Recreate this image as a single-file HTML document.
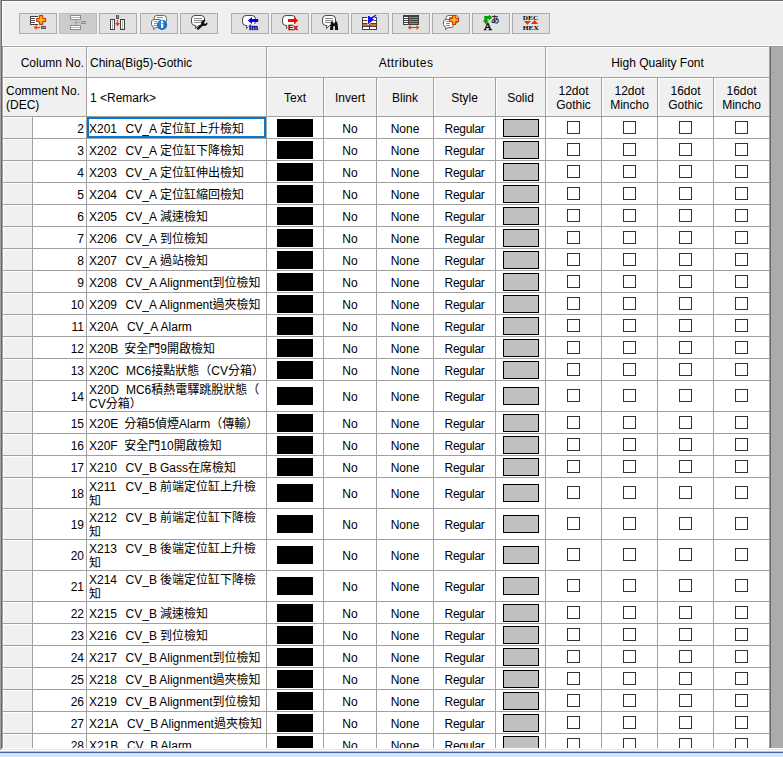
<!DOCTYPE html>
<html lang="zh-Hant">
<head>
<meta charset="utf-8">
<title>Comment Editor</title>
<style>
html,body{margin:0;padding:0;}
body{width:783px;height:757px;overflow:hidden;background:#f0f0f0;position:relative;
 font-family:"Liberation Sans","Noto Sans CJK TC","WenQuanYi Zen Hei",sans-serif;font-size:12px;line-height:14px;color:#000;}
#app{position:absolute;left:0;top:0;width:783px;height:757px;overflow:hidden;background:#f0f0f0;}
i,b,span{font-style:normal;font-weight:normal;}
.lb0{position:absolute;left:0;top:0;width:1px;height:750px;background:#a0a0a0;z-index:2;}
.lb1{position:absolute;left:1px;top:0;width:1px;height:749px;background:#696969;z-index:2;}
.lb2{position:absolute;left:2px;top:1px;width:1px;height:45px;background:#fff;}
.tp0{position:absolute;left:1px;top:0;width:782px;height:1px;background:#696969;}
.tp1{position:absolute;left:2px;top:1px;width:781px;height:1px;background:#fff;}
.tp2{position:absolute;left:2px;top:45px;width:781px;height:1px;background:#fff;}
.tb{position:absolute;top:13px;height:19px;width:36px;border:1px solid #adadad;background:#e1e1e1;}
.tb.dis{background:#cccccc;border-color:#bfbfbf;}
.tb svg{position:absolute;left:0;top:0;}
#tbsvg{position:absolute;left:0;top:0;}
.rl{position:absolute;left:770px;top:47px;width:1px;height:701px;background:#696969;}
.hl{position:absolute;left:2px;top:46px;width:781px;height:1px;background:#a0a0a0;}
#grid{position:absolute;left:2px;top:47px;width:781px;height:701px;background:#ababab;overflow:hidden;}
#tbl{position:absolute;left:0;top:0;width:769px;height:720px;background:#a0a0a0;}
/* all cells positioned in page coordinates via #abs */
#abs{position:absolute;left:-2px;top:-47px;width:783px;height:757px;}
.h{position:absolute;background:#f0f0f0;box-shadow:inset 1px 1px 0 #fff;white-space:nowrap;text-align:center;}
.h span{position:absolute;left:0;width:100%;}
.r{position:absolute;left:0;width:783px;height:21px;}
.r.d{height:30px;}
.r>i,.r>b,.r>span{position:absolute;top:0;height:100%;background:#fff;overflow:hidden;}
.r .rh{left:3px;width:29px;background:#f0f0f0;box-shadow:inset 1px 1px 0 #fff;}
.r .n{left:33px;width:51px;text-align:right;padding-right:2px;line-height:25px;}
.r.d .n,.r.d .a{line-height:32px;}
.r .c{left:87px;width:177px;padding-left:2px;white-space:pre;}
.r .c span{position:absolute;left:2px;top:5px;line-height:14px;}
.r .c span i{position:static;display:inline-block;height:auto;background:none;white-space:pre;vertical-align:baseline;}
.k1{width:36.6px;}.k2{width:36.9px;}.k3{width:35.3px;}.k4{width:37.9px;}
.r .c span i.g{display:inline;margin-left:-.4px;}
.r.d .c span{top:2px;}
.r .a{text-align:center;line-height:25px;}
.a1{left:324px;width:52px;}
.a2{left:377px;width:56px;}
.a3{left:434px;width:61px;letter-spacing:-.3px;}
.r .w1{left:267px;width:56px;}
.r .w2{left:496px;width:49px;}
.bk{position:absolute;left:10px;top:50%;margin-top:-9px;width:36px;height:18px;background:#000;}
.sd{position:absolute;left:7px;top:50%;margin-top:-9px;width:34px;height:16px;background:#c0c0c0;border:1px solid #000;}
.r .cb{width:55px;}
.q0{left:546px;}.q1{left:602px;}.q2{left:658px;}.q3{left:714px;}
.cb i{position:absolute;left:21px;top:50%;margin-top:-7px;width:11px;height:11px;border:1px solid #333;background:#fff;}
.sel{position:absolute;left:87px;top:117px;width:175px;height:17px;border:2px solid #0078d7;}
.bot1{position:absolute;left:0;top:748px;width:783px;height:3px;background:#fff;border-top:0;}
.bot1 i{position:absolute;left:0;top:1px;width:783px;height:1px;background:#e3e3e3;}
.bot2{position:absolute;left:0;top:751px;width:783px;height:1px;background:#f5b95a;}
.bot3{position:absolute;left:0;top:752px;width:783px;height:1px;background:#4265aa;}
.bot4{position:absolute;left:0;top:753px;width:783px;height:4px;background:#d7e4fa;}
</style>
</head>
<body>
<div id="app">
<div class="lb0"></div><div class="lb1"></div><div class="lb2"></div><div class="tp0"></div><div class="tp1"></div><div class="tp2"></div>
<div class="tb" style="left:19px"></div>
<div class="tb dis" style="left:59px"></div>
<div class="tb" style="left:99px"></div>
<div class="tb" style="left:140px"></div>
<div class="tb" style="left:180px"></div>
<div class="tb" style="left:231px"></div>
<div class="tb" style="left:271px"></div>
<div class="tb" style="left:311px"></div>
<div class="tb" style="left:351px"></div>
<div class="tb" style="left:392px"></div>
<div class="tb" style="left:432px"></div>
<div class="tb" style="left:472px"></div>
<div class="tb" style="left:512px"></div>
<svg id="tbsvg" width="783" height="46" viewBox="0 0 783 46"><defs><radialGradient id="og" cx="50%" cy="45%" r="60%"><stop offset="0" stop-color="#ffc21a"/><stop offset="1" stop-color="#ff7a00"/></radialGradient><radialGradient id="bg" cx="45%" cy="40%" r="65%"><stop offset="0" stop-color="#3a8fe0"/><stop offset="1" stop-color="#0a5fb8"/></radialGradient></defs>
<g shape-rendering="crispEdges"><rect x="30" y="16" width="8" height="9" fill="#fff"/><path d="M38,16.5 H30.5 V24.5 H38" fill="none" stroke="#404040"/><path d="M31,18.5 H35 M31,20.5 H35 M31,22.5 H35" stroke="#555"/></g>
<path d="M39.4,15.5 H42.8 V18.5 H45.7 V21.6 H42.8 V24.5 H39.4 V21.6 H36.5 V18.5 H39.4 Z" fill="url(#og)" stroke="#c8300a" stroke-width="1" stroke-linejoin="miter"/>
<path d="M34.5,27.5 H40" stroke="#ff4500" stroke-width="1.2"/><path d="M33.6,27.5 L36.8,24.9 V30.1 Z" fill="#ff4500"/>
<rect x="41" y="26" width="5" height="3" fill="#555" shape-rendering="crispEdges"/><rect x="42" y="27" width="4" height="1" fill="#ff7a00" shape-rendering="crispEdges"/>
<g shape-rendering="crispEdges"><rect x="70.5" y="15.5" width="10" height="4" fill="#fff" stroke="#8c8c8c"/><path d="M71,17.5 H80" stroke="#b4b4b4"/><rect x="70.5" y="25.5" width="10" height="4" fill="#fff" stroke="#8c8c8c"/><path d="M71,27.5 H80" stroke="#b4b4b4"/><path d="M76.5,20 V25" stroke="#a6a6a6"/><path d="M81,21.5 H86 M81,23.5 H86" stroke="#8c8c8c"/><path d="M81,22.5 H86" stroke="#bdbdbd"/></g><path d="M74.2,22.5 L76.5,20.6 V24.4 Z" fill="#a6a6a6"/><path d="M76,22.5 H80" stroke="#a6a6a6"/>
<g shape-rendering="crispEdges"><rect x="110.5" y="19.5" width="4" height="10" fill="#fff" stroke="#404040"/><path d="M112.5,20 V29" stroke="#b0b0b0"/><rect x="120.5" y="19.5" width="4" height="10" fill="#fff" stroke="#404040"/><path d="M122.5,20 V29" stroke="#b0b0b0"/><rect x="116" y="15" width="3" height="4" fill="#555"/><rect x="117" y="15" width="1" height="3" fill="#ff7a00"/></g><path d="M117.5,20 V24" stroke="#ff3300" stroke-width="1.2"/><path d="M115,23 H120 L117.5,26.2 Z" fill="#ff3300"/>
<path d="M156.5,15.5 H163.5 Q166.5,15.5 166.5,18.5 V20 Q166.5,23 163.5,23 H156 Q154,23 154,20 V18.5 Q154,15.5 156.5,15.5 Z" fill="#fff" stroke="#3a3a3a" stroke-width=".75"/><path d="M157,17.5 H163" stroke="#8f8f8f"/><path d="M154,19.5 H159 Q161.5,19.5 161.5,22 V24.5 Q161.5,27.5 159,27.5 H156 L153.5,29.5 L154,27.2 Q151.5,26.5 151.5,24.5 V22 Q151.5,19.5 154,19.5 Z" fill="#fff" stroke="#3a3a3a" stroke-width=".75" stroke-linejoin="round"/><path d="M154,21.5 H157 M154,23.5 H158 M154,25.5 H158" stroke="#8f8f8f"/>
<circle cx="162.1" cy="24.8" r="5.1" fill="url(#bg)"/><rect x="161" y="23.5" width="2.2" height="4.5" fill="#fff"/><circle cx="162.1" cy="21.7" r="1.2" fill="#fff"/>
<path d="M195,15.5 H201 Q204.5,15.5 204.5,19 V21.5 Q204.5,25.5 200.5,25.5 H198.5 L195.5,28.5 L195.8,25.5 H195 Q191.5,25.5 191.5,22 V19 Q191.5,15.5 195,15.5 Z" fill="#fff" stroke="#2a2a2a" stroke-width=".85" stroke-linejoin="round"/><path d="M194,18.5 H202" stroke="#8a8a8a" stroke-width="1"/><path d="M194,20.5 H202" stroke="#8a8a8a" stroke-width="1"/><path d="M194,22.5 H202" stroke="#8a8a8a" stroke-width="1"/>
<path d="M198,28.6 L203,23.8" stroke="#111" stroke-width="2.3" stroke-linecap="round"/><circle cx="204.2" cy="22.9" r="3" fill="#111"/><path d="M203.9,22.9 L206,19.2 L208.2,21.4 L205.2,24 Z" fill="#e1e1e1"/><path d="M203.2,20.2 L205.4,19.8 L204.6,21.6 Z M205.4,24.6 L207.4,22.4 L207.2,24.4 Z" fill="#111"/>
<path d="M246,15.5 H252 Q255.5,15.5 255.5,19 V21.5 Q255.5,25.5 251.5,25.5 H249.5 L246.5,28.5 L246.8,25.5 H246 Q242.5,25.5 242.5,22 V19 Q242.5,15.5 246,15.5 Z" fill="#fff" stroke="#2a2a2a" stroke-width=".85" stroke-linejoin="round"/>
<path d="M247.8,20.5 L252,17 V19 H258.2 V22 H252 V24 Z" fill="#0000f0"/>
<rect x="248.4" y="24" width="10.4" height="6.4" rx="1" fill="#e6e6e6"/>
<text x="249" y="29.8" font-family="'Liberation Sans',sans-serif" font-weight="bold" font-size="7.6" fill="#000080" stroke="#000080" stroke-width=".4" textLength="9" lengthAdjust="spacingAndGlyphs">Im</text>
<path d="M286,15.5 H292 Q295.5,15.5 295.5,19 V21.5 Q295.5,25.5 291.5,25.5 H289.5 L286.5,28.5 L286.8,25.5 H286 Q282.5,25.5 282.5,22 V19 Q282.5,15.5 286,15.5 Z" fill="#fff" stroke="#2a2a2a" stroke-width=".85" stroke-linejoin="round"/>
<path d="M298.3,20.5 L294,17 V19 H288 V22 H294 V24 Z" fill="#ee1100"/>
<rect x="287.4" y="24" width="11.4" height="6.4" rx="1" fill="#e6e6e6"/>
<text x="288" y="29.8" font-family="'Liberation Sans',sans-serif" font-weight="bold" font-size="7.6" fill="#c00000" stroke="#c00000" stroke-width=".4" textLength="10" lengthAdjust="spacingAndGlyphs">Ex</text>
<path d="M326,15.5 H332 Q335.5,15.5 335.5,19 V21.5 Q335.5,25.5 331.5,25.5 H329.5 L326.5,28.5 L326.8,25.5 H326 Q322.5,25.5 322.5,22 V19 Q322.5,15.5 326,15.5 Z" fill="#fff" stroke="#2a2a2a" stroke-width=".85" stroke-linejoin="round"/><path d="M325,18.5 H333" stroke="#8a8a8a" stroke-width="1"/><path d="M325,20.5 H333" stroke="#8a8a8a" stroke-width="1"/><path d="M325,22.5 H333" stroke="#8a8a8a" stroke-width="1"/>
<path d="M330,30 L330.5,24.4 L331.2,21.4 H333 L333.6,23.4 H334.6 L335.2,21.4 H337 L337.7,24.4 L338.2,30 H335 V26.2 H333.2 V30 Z" fill="#111"/>
<g shape-rendering="crispEdges"><rect x="362" y="17" width="15" height="13" fill="#404040"/><rect x="363" y="18" width="6" height="2" fill="#fff"/><rect x="370" y="18" width="6" height="2" fill="#fff"/><rect x="363" y="21" width="6" height="2" fill="#fff"/><rect x="370" y="21" width="6" height="2" fill="#fff"/><rect x="363" y="24" width="6" height="2" fill="#ff6600"/><rect x="370" y="24" width="6" height="2" fill="#ff6600"/><rect x="363" y="27" width="6" height="2" fill="#fff"/><rect x="370" y="27" width="6" height="2" fill="#fff"/></g>
<path d="M367.4,15.6 V24.8 L369,24.8 L374.8,19.6 L373,18.8 L376.8,15.6 L375.8,14.6 L371.6,17.2 L369.4,15.6 Z" fill="#fff" opacity=".9"/><path d="M368,16 V24.2 L374.2,19.4 L372.2,18.6 L376.6,15.4 L375.6,14.8 L370.8,17.4 L369.2,16 Z" fill="#0a0af5"/>
<g shape-rendering="crispEdges"><rect x="403" y="15" width="16" height="10" fill="#404040"/><rect x="404" y="17" width="4" height="1" fill="#fff"/><rect x="409" y="17" width="9" height="1" fill="#ff6a00"/><rect x="404" y="19" width="4" height="1" fill="#fff"/><rect x="409" y="19" width="9" height="1" fill="#ff6a00"/><rect x="404" y="21" width="4" height="1" fill="#fff"/><rect x="409" y="21" width="9" height="1" fill="#ff6a00"/><rect x="404" y="23" width="4" height="1" fill="#fff"/><rect x="409" y="23" width="9" height="1" fill="#ff6a00"/></g>
<path d="M409,27.5 H418" stroke="#ff3300" stroke-width="1.1"/><path d="M407.8,27.5 L410.6,25 V30 Z M419.3,27.5 L416.5,25 V30 Z" fill="#ff3300"/>
<path d="M448.5,15.5 H455.5 Q458.5,15.5 458.5,18.5 V20 Q458.5,23 455.5,23 H448 Q446,23 446,20 V18.5 Q446,15.5 448.5,15.5 Z" fill="#fff" stroke="#3a3a3a" stroke-width=".75"/><path d="M449,17.5 H455" stroke="#8f8f8f"/><path d="M446,19.5 H451 Q453.5,19.5 453.5,22 V24.5 Q453.5,27.5 451,27.5 H448 L445.5,29.5 L446,27.2 Q443.5,26.5 443.5,24.5 V22 Q443.5,19.5 446,19.5 Z" fill="#fff" stroke="#3a3a3a" stroke-width=".75" stroke-linejoin="round"/><path d="M446,21.5 H449 M446,23.5 H450 M446,25.5 H450" stroke="#8f8f8f"/>
<path d="M452.4,15.5 H455.8 V18.5 H458.7 V21.6 H455.8 V24.5 H452.4 V21.6 H449.5 V18.5 H452.4 Z" fill="url(#og)" stroke="#c8300a" stroke-width="1" stroke-linejoin="miter"/>
<path d="M485.8,24.2 L482.8,20.6 H484.3 V16 H488.8 V14.6 L492.2,17.5 L488.8,20.4 V19 H487.3 V20.6 H488.8 Z" fill="#00a000"/>
<text x="483.8" y="29.9" font-family="'Liberation Serif',serif" font-size="11" fill="#000" stroke="#000" stroke-width=".35" textLength="8.2" lengthAdjust="spacingAndGlyphs">A</text>
<text x="490.8" y="23.2" font-family="'Liberation Sans','Noto Sans CJK JP',sans-serif" font-size="8.8" fill="#000" stroke="#000" stroke-width=".15">あ</text>
<text x="522.8" y="19.6" font-family="'Liberation Serif',serif" font-weight="bold" font-size="6.9" fill="#000" textLength="15.4" lengthAdjust="spacingAndGlyphs">DEC</text>
<text x="522.8" y="30" font-family="'Liberation Serif',serif" font-weight="bold" font-size="6.9" fill="#000" textLength="16" lengthAdjust="spacingAndGlyphs">HEX</text>
<path d="M523.8,21 H531 L527.4,24.8 Z M531,24 L534.6,20 L538.2,24 Z" fill="#ff2a00"/></svg>
<div class="hl"></div>
<div id="grid"><div id="tbl"><div id="abs">
<div class="h" style="left:3px;top:47px;width:83px;height:30px;"><span style="top:9px;text-align:right;left:-2px">Column No.</span></div>
<div class="h" style="left:87px;top:47px;width:179px;height:30px;"><span style="top:9px;text-align:left;left:3px">China(Big5)-Gothic</span></div>
<div class="h" style="left:267px;top:47px;width:278px;height:30px;"><span style="top:9px;letter-spacing:.4px">Attributes</span></div>
<div class="h" style="left:546px;top:47px;width:223px;height:30px;"><span style="top:9px">High Quality Font</span></div>
<div class="h" style="left:3px;top:78px;width:83px;height:38px;"><span style="top:6px;text-align:left;left:3px">Comment No.<br>(DEC)</span></div>
<div class="h" style="left:87px;top:78px;width:179px;height:38px;background:#fff"><span style="top:13px;text-align:left;left:3px">1 &lt;Remark&gt;</span></div>
<div class="h" style="left:267px;top:78px;width:56px;height:38px;"><span style="top:13px">Text</span></div>
<div class="h" style="left:324px;top:78px;width:52px;height:38px;"><span style="top:13px">Invert</span></div>
<div class="h" style="left:377px;top:78px;width:56px;height:38px;"><span style="top:13px">Blink</span></div>
<div class="h" style="left:434px;top:78px;width:61px;height:38px;"><span style="top:13px">Style</span></div>
<div class="h" style="left:496px;top:78px;width:49px;height:38px;"><span style="top:13px">Solid</span></div>
<div class="h" style="left:546px;top:78px;width:55px;height:38px;"><span style="top:6px">12dot<br>Gothic</span></div>
<div class="h" style="left:602px;top:78px;width:55px;height:38px;"><span style="top:6px">12dot<br>Mincho</span></div>
<div class="h" style="left:658px;top:78px;width:55px;height:38px;"><span style="top:6px">16dot<br>Gothic</span></div>
<div class="h" style="left:714px;top:78px;width:55px;height:38px;"><span style="top:6px">16dot<br>Mincho</span></div>
<div class="r" style="top:117px"><i class="rh"></i><b class="n">2</b><span class="c"><span><i class="k k1">X201  </i>CV_A<i class="g"> </i>定位缸上升檢知</span></span><i class="w1"><i class="bk"></i></i><b class="a a1">No</b><b class="a a2">None</b><b class="a a3">Regular</b><i class="w2"><i class="sd"></i></i><i class="cb q0"><i></i></i><i class="cb q1"><i></i></i><i class="cb q2"><i></i></i><i class="cb q3"><i></i></i></div>
<div class="r" style="top:139px"><i class="rh"></i><b class="n">3</b><span class="c"><span><i class="k k1">X202  </i>CV_A<i class="g"> </i>定位缸下降檢知</span></span><i class="w1"><i class="bk"></i></i><b class="a a1">No</b><b class="a a2">None</b><b class="a a3">Regular</b><i class="w2"><i class="sd"></i></i><i class="cb q0"><i></i></i><i class="cb q1"><i></i></i><i class="cb q2"><i></i></i><i class="cb q3"><i></i></i></div>
<div class="r" style="top:161px"><i class="rh"></i><b class="n">4</b><span class="c"><span><i class="k k1">X203  </i>CV_A<i class="g"> </i>定位缸伸出檢知</span></span><i class="w1"><i class="bk"></i></i><b class="a a1">No</b><b class="a a2">None</b><b class="a a3">Regular</b><i class="w2"><i class="sd"></i></i><i class="cb q0"><i></i></i><i class="cb q1"><i></i></i><i class="cb q2"><i></i></i><i class="cb q3"><i></i></i></div>
<div class="r" style="top:183px"><i class="rh"></i><b class="n">5</b><span class="c"><span><i class="k k1">X204  </i>CV_A<i class="g"> </i>定位缸縮回檢知</span></span><i class="w1"><i class="bk"></i></i><b class="a a1">No</b><b class="a a2">None</b><b class="a a3">Regular</b><i class="w2"><i class="sd"></i></i><i class="cb q0"><i></i></i><i class="cb q1"><i></i></i><i class="cb q2"><i></i></i><i class="cb q3"><i></i></i></div>
<div class="r" style="top:205px"><i class="rh"></i><b class="n">6</b><span class="c"><span><i class="k k1">X205  </i>CV_A<i class="g"> </i>減速檢知</span></span><i class="w1"><i class="bk"></i></i><b class="a a1">No</b><b class="a a2">None</b><b class="a a3">Regular</b><i class="w2"><i class="sd"></i></i><i class="cb q0"><i></i></i><i class="cb q1"><i></i></i><i class="cb q2"><i></i></i><i class="cb q3"><i></i></i></div>
<div class="r" style="top:227px"><i class="rh"></i><b class="n">7</b><span class="c"><span><i class="k k1">X206  </i>CV_A<i class="g"> </i>到位檢知</span></span><i class="w1"><i class="bk"></i></i><b class="a a1">No</b><b class="a a2">None</b><b class="a a3">Regular</b><i class="w2"><i class="sd"></i></i><i class="cb q0"><i></i></i><i class="cb q1"><i></i></i><i class="cb q2"><i></i></i><i class="cb q3"><i></i></i></div>
<div class="r" style="top:249px"><i class="rh"></i><b class="n">8</b><span class="c"><span><i class="k k1">X207  </i>CV_A<i class="g"> </i>過站檢知</span></span><i class="w1"><i class="bk"></i></i><b class="a a1">No</b><b class="a a2">None</b><b class="a a3">Regular</b><i class="w2"><i class="sd"></i></i><i class="cb q0"><i></i></i><i class="cb q1"><i></i></i><i class="cb q2"><i></i></i><i class="cb q3"><i></i></i></div>
<div class="r" style="top:271px"><i class="rh"></i><b class="n">9</b><span class="c"><span><i class="k k1">X208  </i>CV_A<i class="g"> </i>Alignment到位檢知</span></span><i class="w1"><i class="bk"></i></i><b class="a a1">No</b><b class="a a2">None</b><b class="a a3">Regular</b><i class="w2"><i class="sd"></i></i><i class="cb q0"><i></i></i><i class="cb q1"><i></i></i><i class="cb q2"><i></i></i><i class="cb q3"><i></i></i></div>
<div class="r" style="top:293px"><i class="rh"></i><b class="n">10</b><span class="c"><span><i class="k k1">X209  </i>CV_A<i class="g"> </i>Alignment過夾檢知</span></span><i class="w1"><i class="bk"></i></i><b class="a a1">No</b><b class="a a2">None</b><b class="a a3">Regular</b><i class="w2"><i class="sd"></i></i><i class="cb q0"><i></i></i><i class="cb q1"><i></i></i><i class="cb q2"><i></i></i><i class="cb q3"><i></i></i></div>
<div class="r" style="top:315px"><i class="rh"></i><b class="n">11</b><span class="c"><span><i class="k k4">X20A  </i>CV_A<i class="g"> </i>Alarm</span></span><i class="w1"><i class="bk"></i></i><b class="a a1">No</b><b class="a a2">None</b><b class="a a3">Regular</b><i class="w2"><i class="sd"></i></i><i class="cb q0"><i></i></i><i class="cb q1"><i></i></i><i class="cb q2"><i></i></i><i class="cb q3"><i></i></i></div>
<div class="r" style="top:337px"><i class="rh"></i><b class="n">12</b><span class="c"><span><i class="k k3">X20B  </i>安全門9開啟檢知</span></span><i class="w1"><i class="bk"></i></i><b class="a a1">No</b><b class="a a2">None</b><b class="a a3">Regular</b><i class="w2"><i class="sd"></i></i><i class="cb q0"><i></i></i><i class="cb q1"><i></i></i><i class="cb q2"><i></i></i><i class="cb q3"><i></i></i></div>
<div class="r" style="top:359px"><i class="rh"></i><b class="n">13</b><span class="c"><span><i class="k k2">X20C  </i>MC6接點狀態（CV分箱）</span></span><i class="w1"><i class="bk"></i></i><b class="a a1">No</b><b class="a a2">None</b><b class="a a3">Regular</b><i class="w2"><i class="sd"></i></i><i class="cb q0"><i></i></i><i class="cb q1"><i></i></i><i class="cb q2"><i></i></i><i class="cb q3"><i></i></i></div>
<div class="r d" style="top:381px"><i class="rh"></i><b class="n">14</b><span class="c"><span><i class="k k2">X20D  </i>MC6積熱電驛跳脫狀態（<br>CV分箱）</span></span><i class="w1"><i class="bk"></i></i><b class="a a1">No</b><b class="a a2">None</b><b class="a a3">Regular</b><i class="w2"><i class="sd"></i></i><i class="cb q0"><i></i></i><i class="cb q1"><i></i></i><i class="cb q2"><i></i></i><i class="cb q3"><i></i></i></div>
<div class="r" style="top:412px"><i class="rh"></i><b class="n">15</b><span class="c"><span><i class="k k3">X20E  </i>分箱5偵煙Alarm（傳輸）</span></span><i class="w1"><i class="bk"></i></i><b class="a a1">No</b><b class="a a2">None</b><b class="a a3">Regular</b><i class="w2"><i class="sd"></i></i><i class="cb q0"><i></i></i><i class="cb q1"><i></i></i><i class="cb q2"><i></i></i><i class="cb q3"><i></i></i></div>
<div class="r" style="top:434px"><i class="rh"></i><b class="n">16</b><span class="c"><span><i class="k k3">X20F  </i>安全門10開啟檢知</span></span><i class="w1"><i class="bk"></i></i><b class="a a1">No</b><b class="a a2">None</b><b class="a a3">Regular</b><i class="w2"><i class="sd"></i></i><i class="cb q0"><i></i></i><i class="cb q1"><i></i></i><i class="cb q2"><i></i></i><i class="cb q3"><i></i></i></div>
<div class="r" style="top:456px"><i class="rh"></i><b class="n">17</b><span class="c"><span><i class="k k1">X210  </i>CV_B<i class="g"> </i>Gass在席檢知</span></span><i class="w1"><i class="bk"></i></i><b class="a a1">No</b><b class="a a2">None</b><b class="a a3">Regular</b><i class="w2"><i class="sd"></i></i><i class="cb q0"><i></i></i><i class="cb q1"><i></i></i><i class="cb q2"><i></i></i><i class="cb q3"><i></i></i></div>
<div class="r d" style="top:478px"><i class="rh"></i><b class="n">18</b><span class="c"><span><i class="k k1">X211  </i>CV_B<i class="g"> </i>前端定位缸上升檢<br>知</span></span><i class="w1"><i class="bk"></i></i><b class="a a1">No</b><b class="a a2">None</b><b class="a a3">Regular</b><i class="w2"><i class="sd"></i></i><i class="cb q0"><i></i></i><i class="cb q1"><i></i></i><i class="cb q2"><i></i></i><i class="cb q3"><i></i></i></div>
<div class="r d" style="top:509px"><i class="rh"></i><b class="n">19</b><span class="c"><span><i class="k k1">X212  </i>CV_B<i class="g"> </i>前端定位缸下降檢<br>知</span></span><i class="w1"><i class="bk"></i></i><b class="a a1">No</b><b class="a a2">None</b><b class="a a3">Regular</b><i class="w2"><i class="sd"></i></i><i class="cb q0"><i></i></i><i class="cb q1"><i></i></i><i class="cb q2"><i></i></i><i class="cb q3"><i></i></i></div>
<div class="r d" style="top:540px"><i class="rh"></i><b class="n">20</b><span class="c"><span><i class="k k1">X213  </i>CV_B<i class="g"> </i>後端定位缸上升檢<br>知</span></span><i class="w1"><i class="bk"></i></i><b class="a a1">No</b><b class="a a2">None</b><b class="a a3">Regular</b><i class="w2"><i class="sd"></i></i><i class="cb q0"><i></i></i><i class="cb q1"><i></i></i><i class="cb q2"><i></i></i><i class="cb q3"><i></i></i></div>
<div class="r d" style="top:571px"><i class="rh"></i><b class="n">21</b><span class="c"><span><i class="k k1">X214  </i>CV_B<i class="g"> </i>後端定位缸下降檢<br>知</span></span><i class="w1"><i class="bk"></i></i><b class="a a1">No</b><b class="a a2">None</b><b class="a a3">Regular</b><i class="w2"><i class="sd"></i></i><i class="cb q0"><i></i></i><i class="cb q1"><i></i></i><i class="cb q2"><i></i></i><i class="cb q3"><i></i></i></div>
<div class="r" style="top:602px"><i class="rh"></i><b class="n">22</b><span class="c"><span><i class="k k1">X215  </i>CV_B<i class="g"> </i>減速檢知</span></span><i class="w1"><i class="bk"></i></i><b class="a a1">No</b><b class="a a2">None</b><b class="a a3">Regular</b><i class="w2"><i class="sd"></i></i><i class="cb q0"><i></i></i><i class="cb q1"><i></i></i><i class="cb q2"><i></i></i><i class="cb q3"><i></i></i></div>
<div class="r" style="top:624px"><i class="rh"></i><b class="n">23</b><span class="c"><span><i class="k k1">X216  </i>CV_B<i class="g"> </i>到位檢知</span></span><i class="w1"><i class="bk"></i></i><b class="a a1">No</b><b class="a a2">None</b><b class="a a3">Regular</b><i class="w2"><i class="sd"></i></i><i class="cb q0"><i></i></i><i class="cb q1"><i></i></i><i class="cb q2"><i></i></i><i class="cb q3"><i></i></i></div>
<div class="r" style="top:646px"><i class="rh"></i><b class="n">24</b><span class="c"><span><i class="k k1">X217  </i>CV_B<i class="g"> </i>Alignment到位檢知</span></span><i class="w1"><i class="bk"></i></i><b class="a a1">No</b><b class="a a2">None</b><b class="a a3">Regular</b><i class="w2"><i class="sd"></i></i><i class="cb q0"><i></i></i><i class="cb q1"><i></i></i><i class="cb q2"><i></i></i><i class="cb q3"><i></i></i></div>
<div class="r" style="top:668px"><i class="rh"></i><b class="n">25</b><span class="c"><span><i class="k k1">X218  </i>CV_B<i class="g"> </i>Alignment過夾檢知</span></span><i class="w1"><i class="bk"></i></i><b class="a a1">No</b><b class="a a2">None</b><b class="a a3">Regular</b><i class="w2"><i class="sd"></i></i><i class="cb q0"><i></i></i><i class="cb q1"><i></i></i><i class="cb q2"><i></i></i><i class="cb q3"><i></i></i></div>
<div class="r" style="top:690px"><i class="rh"></i><b class="n">26</b><span class="c"><span><i class="k k1">X219  </i>CV_B<i class="g"> </i>Alignment到位檢知</span></span><i class="w1"><i class="bk"></i></i><b class="a a1">No</b><b class="a a2">None</b><b class="a a3">Regular</b><i class="w2"><i class="sd"></i></i><i class="cb q0"><i></i></i><i class="cb q1"><i></i></i><i class="cb q2"><i></i></i><i class="cb q3"><i></i></i></div>
<div class="r" style="top:712px"><i class="rh"></i><b class="n">27</b><span class="c"><span><i class="k k4">X21A  </i>CV_B<i class="g"> </i>Alignment過夾檢知</span></span><i class="w1"><i class="bk"></i></i><b class="a a1">No</b><b class="a a2">None</b><b class="a a3">Regular</b><i class="w2"><i class="sd"></i></i><i class="cb q0"><i></i></i><i class="cb q1"><i></i></i><i class="cb q2"><i></i></i><i class="cb q3"><i></i></i></div>
<div class="r" style="top:734px"><i class="rh"></i><b class="n">28</b><span class="c"><span><i class="k k4">X21B  </i>CV_B<i class="g"> </i>Alarm</span></span><i class="w1"><i class="bk"></i></i><b class="a a1">No</b><b class="a a2">None</b><b class="a a3">Regular</b><i class="w2"><i class="sd"></i></i><i class="cb q0"><i></i></i><i class="cb q1"><i></i></i><i class="cb q2"><i></i></i><i class="cb q3"><i></i></i></div>
<div class="sel"></div>
</div></div></div>
<div class="rl"></div>
<div class="bot1"><i></i></div><div class="bot2"></div><div class="bot3"></div><div class="bot4"></div>
</div>
</body>
</html>
